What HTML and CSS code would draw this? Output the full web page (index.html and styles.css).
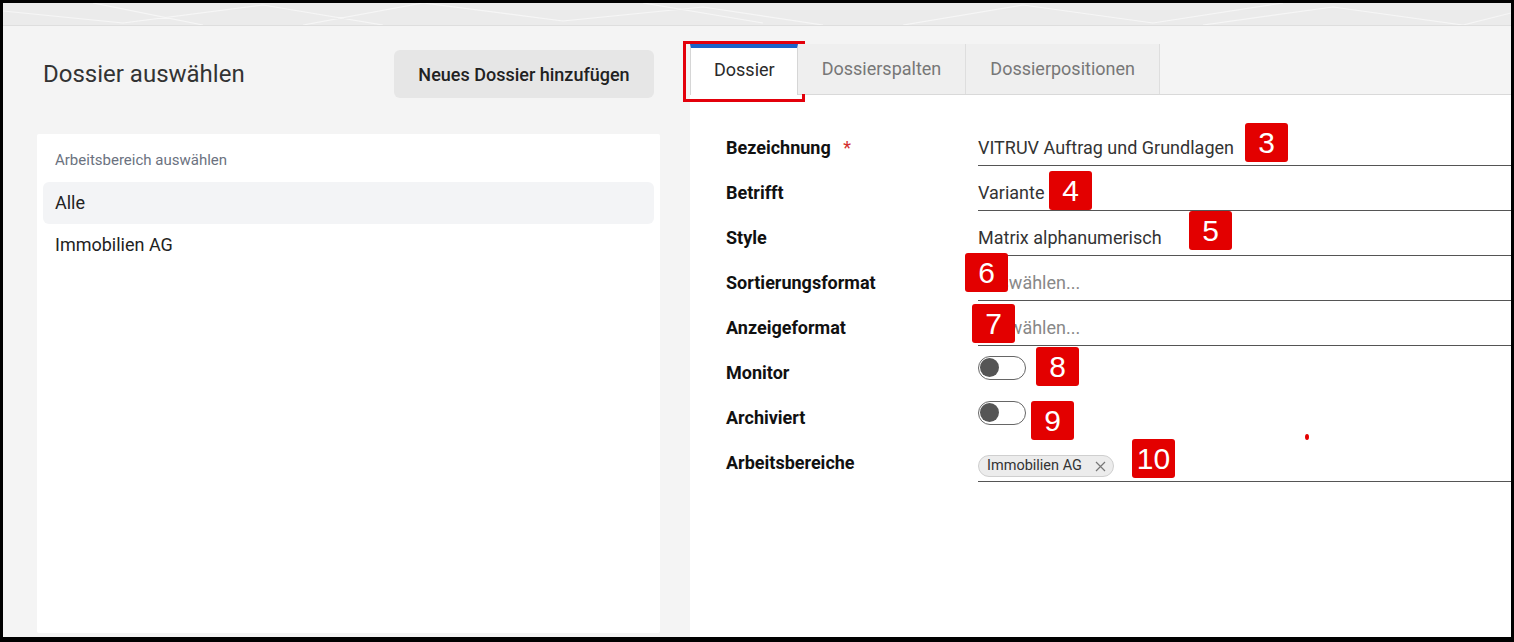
FILE: index.html
```html
<!DOCTYPE html>
<html lang="de">
<head>
    <meta charset="UTF-8">
    <meta name="viewport" content="width=device-width, initial-scale=1.0">
    <title>Dossier</title>
    <link rel="stylesheet" href="styles.css">
</head>
<body>
    <div class="frame">
        <div class="topbar">
            <svg class="topbar-lines" width="1508" height="22" viewBox="0 0 1508 22">
                <path d="M0 8 L120 20 L260 2 L380 22 M90 0 L200 22 M300 22 L420 0 L560 18 L700 4 L820 22 M640 0 L760 20 M900 22 L1020 2 L1150 20 L1280 0 M1200 22 L1330 4 L1460 22 L1508 10" fill="none" stroke="#f6f6f6" stroke-width="1.2"/>
            </svg>
        </div>

        <div class="main">
            <!-- left: dossier list -->
            <div class="left-pane">
                <div class="left-header">
                    <h2 class="left-title">Dossier auswählen</h2>
                    <button class="btn-add">Neues Dossier hinzufügen</button>
                </div>
                <div class="card">
                    <div class="card-label">Arbeitsbereich auswählen</div>
                    <div class="list-item active">Alle</div>
                    <div class="list-item">Immobilien AG</div>
                </div>
            </div>

            <!-- right: tabs + form -->
            <div class="right-pane">
                <div class="tabs">
                    <div class="tab active">Dossier<span class="mark-box"></span></div>
                    <div class="tab">Dossierspalten</div>
                    <div class="tab">Dossierpositionen</div>
                </div>
                <div class="panel">
                    <div class="form">
                        <div class="row">
                            <div class="label">Bezeichnung <span class="req">*</span></div>
                            <div class="field">VITRUV Auftrag und Grundlagen</div>
                        </div>
                        <div class="row">
                            <div class="label">Betrifft</div>
                            <div class="field">Variante</div>
                        </div>
                        <div class="row">
                            <div class="label">Style</div>
                            <div class="field">Matrix alphanumerisch</div>
                        </div>
                        <div class="row">
                            <div class="label">Sortierungsformat</div>
                            <div class="field placeholder">Auswählen...</div>
                        </div>
                        <div class="row">
                            <div class="label">Anzeigeformat</div>
                            <div class="field placeholder">Auswählen...</div>
                        </div>
                        <div class="row">
                            <div class="label">Monitor</div>
                            <div class="field plain"><span class="toggle"><span class="knob"></span></span></div>
                        </div>
                        <div class="row">
                            <div class="label">Archiviert</div>
                            <div class="field plain"><span class="toggle"><span class="knob"></span></span></div>
                        </div>
                        <div class="row last">
                            <div class="label">Arbeitsbereiche</div>
                            <div class="field chips">
                                <span class="chip">Immobilien AG
                                    <svg class="chip-x" width="11" height="11" viewBox="0 0 11 11"><path d="M1 1 L10 10 M10 1 L1 10" stroke="#777" stroke-width="1.2" fill="none"/></svg>
                                </span>
                            </div>
                        </div>
                    </div>
                </div>
            </div>
        </div>

        <!-- numbered annotations -->
        <span class="badge b3">3</span>
        <span class="badge b4">4</span>
        <span class="badge b5">5</span>
        <span class="badge b6">6</span>
        <span class="badge b7">7</span>
        <span class="badge b8">8</span>
        <span class="badge b9">9</span>
        <span class="badge b10">10</span>
        <span class="red-dot"></span>
    </div>
</body>
</html>
```

FILE: styles.css
```css
* {
    margin: 0;
    padding: 0;
    box-sizing: border-box;
}

body {
    font-family: 'Roboto', 'Liberation Sans', sans-serif;
    background: #fff;
    color: #333;
}

.frame {
    position: relative;
    width: 1514px;
    height: 642px;
    border: 3px solid #000;
    border-bottom-width: 5px;
    display: flex;
    flex-direction: column;
    overflow: hidden;
}

.topbar {
    height: 23px;
    background: #ebebeb;
    border-bottom: 1px solid #dedede;
    overflow: hidden;
}

.topbar-lines {
    display: block;
}

.main {
    flex: 1;
    display: grid;
    grid-template-columns: 687px 1fr;
    background: #f4f4f4;
    min-height: 0;
}

/* left pane */
.left-pane {
    display: flex;
    flex-direction: column;
    padding: 24px 30px 4px 34px;
}

.left-header {
    display: flex;
    justify-content: space-between;
    align-items: center;
    padding: 0 6px;
    height: 48px;
    margin-bottom: 36px;
}

.left-title {
    font-size: 24px;
    font-weight: 400;
    color: #333;
}

.btn-add {
    font-family: 'Roboto', sans-serif;
    font-size: 18px;
    font-weight: 500;
    color: #222;
    background: #e6e6e6;
    border: none;
    border-radius: 6px;
    height: 48px;
    width: 260px;
}

.card {
    flex: 1;
    background: #fff;
    padding: 17px 6px 0;
    border-radius: 2px;
}

.card-label {
    font-size: 15px;
    color: #6b7280;
    padding: 0 12px;
    line-height: 18px;
    margin-bottom: 13px;
}

.list-item {
    height: 42px;
    line-height: 42px;
    padding: 0 12px;
    font-size: 18px;
    color: #222;
    border-radius: 6px;
}

.list-item.active {
    background: #f3f4f6;
}

/* right pane */
.right-pane {
    display: flex;
    flex-direction: column;
    padding-top: 18px;
}

.tabs {
    display: flex;
    align-items: flex-end;
    border-bottom: 1px solid #d9d9d9;
    height: 51px;
}

.tab {
    position: relative;
    height: 50px;
    line-height: 49px;
    padding: 0 24px;
    font-size: 18px;
    color: #777;
    background: #efefef;
    border-right: 1px solid #dedede;
}

.tab.active {
    height: 51px;
    margin-bottom: -1px;
    padding: 0 22px 0 23px;
    line-height: 44px;
    background: #fff;
    color: #2a2a2a;
    border-top: 4px solid #1b64c9;
    border-left: 1px solid #d6d6d6;
    border-right: 1px solid #d6d6d6;
}

.mark-box {
    position: absolute;
    top: -7px;
    left: -8px;
    right: -8px;
    bottom: -7px;
    border: 3px solid #e3000b;
}

.panel {
    flex: 1;
    background: #fff;
}

.form {
    padding: 26px 0 0 36px;
}

.row {
    display: grid;
    grid-template-columns: 252px 1fr;
    height: 45px;
}

.row.last {
    height: 46px;
}

.label {
    padding-top: 16px;
    line-height: 22px;
    font-size: 18px;
    font-weight: 700;
    color: #111;
}

.req {
    color: #d32f2f;
    font-weight: 400;
    margin-left: 8px;
}

.field {
    padding-top: 16px;
    line-height: 22px;
    font-size: 18px;
    color: #333;
    border-bottom: 1px solid #555;
}

.field.placeholder {
    color: #888;
}

.field.plain {
    border-bottom: none;
    padding-top: 10px;
}

.field.chips {
    padding-top: 17px;
}

.toggle {
    display: block;
    position: relative;
    width: 48px;
    height: 24px;
    border: 1.5px solid #666;
    border-radius: 12px;
    background: #fff;
}

.knob {
    position: absolute;
    top: 1px;
    left: 1px;
    width: 19px;
    height: 19px;
    border-radius: 50%;
    background: #555;
}

.chip {
    display: inline-flex;
    align-items: center;
    height: 22px;
    padding: 0 7px 0 8px;
    font-size: 14.5px;
    line-height: 1;
    color: #333;
    background: #ececec;
    border: 1px solid #cfcfcf;
    border-radius: 11px;
}

.chip-x {
    display: block;
    margin-left: 13px;
}

/* annotations */
.badge {
    position: absolute;
    width: 43px;
    height: 39px;
    line-height: 39px;
    text-align: center;
    background: #e30000;
    color: #fff;
    font-family: 'Liberation Sans', Arial, sans-serif;
    font-size: 30px;
    border-radius: 3px;
}

.b3 { left: 1242px; top: 120px; }
.b4 { left: 1046px; top: 168px; }
.b5 { left: 1186px; top: 208px; }
.b6 { left: 962px; top: 250px; }
.b7 { left: 969px; top: 301px; }
.b8 { left: 1033px; top: 344px; }
.b9 { left: 1028px; top: 398px; }
.b10 { left: 1129px; top: 436px; }

.red-dot {
    position: absolute;
    left: 1302px;
    top: 431px;
    width: 4px;
    height: 6px;
    border-radius: 50%;
    background: #e30000;
}
```
